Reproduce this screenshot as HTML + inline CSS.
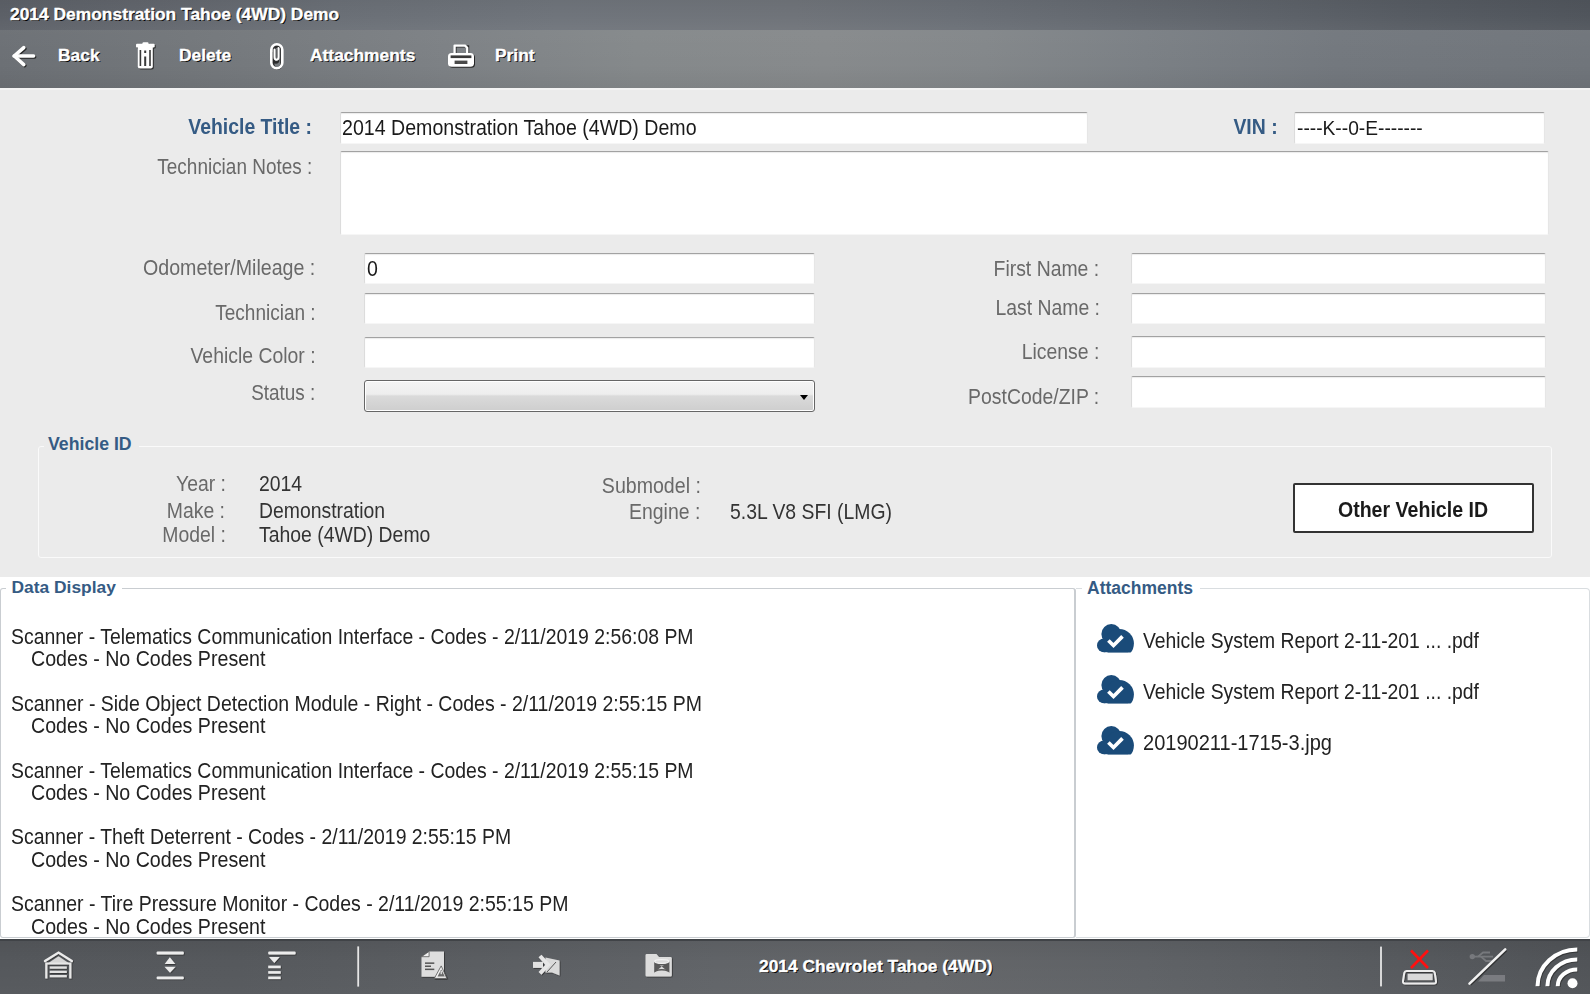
<!DOCTYPE html>
<html><head><meta charset="utf-8">
<style>
*{box-sizing:border-box;margin:0;padding:0}
html,body{width:1590px;height:994px;overflow:hidden;background:#ebebeb;font-family:"Liberation Sans",sans-serif;position:relative}
.a{position:absolute;white-space:nowrap;line-height:1}
#titlebar{position:absolute;left:0;top:0;width:1590px;height:30px;background:linear-gradient(180deg,rgba(0,0,0,0.04) 0%,rgba(0,0,0,0) 50%,rgba(255,255,255,0.04) 100%),linear-gradient(90deg,#5c6067 0%,#62666d 10%,#6a6f76 21%,#6f747b 35%,#6f7379 50%,#6a6f76 60%,#61666d 75%,#575c63 88%,#50555c 100%)}
#toolbar{position:absolute;left:0;top:30px;width:1590px;height:58px;background:linear-gradient(180deg,rgba(255,255,255,0.02) 0%,rgba(0,0,0,0) 60%,rgba(0,0,0,0.05) 100%),linear-gradient(90deg,#6c7075 0%,#73777b 12%,#7d8185 28%,#85898b 40%,#878a8c 52%,#83878a 62%,#7b8085 72%,#73787e 84%,#70757b 100%)}
#tbline{position:absolute;left:0;top:88px;width:1590px;height:2px;background:#f3f3f3}
.wt{color:#fff;font-weight:bold;text-shadow:1px 1px 0 #000;-webkit-text-stroke:0.35px #fff}
.lbl{color:#696969}
.blue{color:#355b84;font-weight:bold}
.val{color:#1a1a1a}
.vid{color:#333}
.dd{color:#222}
.inp{position:absolute;background:#fff;border-top:1.6px solid #a2a2a2;border-left:1px solid #dcdcdc;border-right:1px solid #e6e6e6;border-bottom:1px solid #f6f6f6;border-radius:2px;box-shadow:inset 0 1px 1px rgba(0,0,0,0.08)}
#lower{position:absolute;left:0;top:577px;width:1590px;height:362px;background:#fff}
#bottombar{position:absolute;left:0;top:939px;width:1590px;height:55px;border-top:2px solid #404347;background:linear-gradient(180deg,rgba(0,0,0,0.06) 0%,rgba(0,0,0,0) 40%,rgba(255,255,255,0.02) 100%),linear-gradient(90deg,#55585c 0%,#56595d 15%,#5b5e62 30%,#616468 45%,#646669 58%,#5f6266 72%,#585b5f 86%,#515458 100%)}
.cloud{position:absolute}
</style></head><body>
<svg width="0" height="0" style="position:absolute"><defs>
<clipPath id="cclip"><rect x="0" y="0" width="37" height="28.4"/></clipPath>
<symbol id="cloudsym" viewBox="0 0 37 29">
<g fill="#1a4b79" clip-path="url(#cclip)">
<circle cx="14.3" cy="9.9" r="9.9"/>
<circle cx="22.2" cy="19.6" r="14.7"/>
<circle cx="7" cy="21.4" r="7"/><rect x="7" y="18" width="24" height="10.4"/>
</g>
<polyline points="11.4,16.5 16.5,21.5 25.5,12.4" fill="none" stroke="#fff" stroke-width="3.7"/>
</symbol></defs></svg>

<div id="titlebar"></div>
<div class="a wt" style="left:10.00px;top:6.37px;font-size:17.40px">2014 Demonstration Tahoe (4WD) Demo</div>
<div id="toolbar"></div><div id="tbline"></div>
<!-- toolbar icons -->
<svg style="position:absolute;left:0;top:29px" width="600" height="58" viewBox="0 29 600 58">
<g fill="none" stroke="#1e1e1e" stroke-width="3.6" stroke-linecap="round" stroke-linejoin="round" transform="translate(1,1)" opacity="0.9">
<polyline points="23.8,47.6 14.2,56 23.8,64.6"/><line x1="14.2" y1="56" x2="33.6" y2="56"/>
</g>
<g fill="none" stroke="#fff" stroke-width="3.6" stroke-linecap="round" stroke-linejoin="round">
<polyline points="23.8,47.6 14.2,56 23.8,64.6"/><line x1="14.2" y1="56" x2="33.6" y2="56"/>
</g>
<!-- trash -->
<g transform="translate(1,1)" fill="#1e1e1e" opacity="0.85">
<rect x="136" y="43.8" width="18.7" height="3.6" rx="1"/><rect x="142.5" y="42.3" width="6" height="3" rx="1"/>
<path d="M137.8,47 H152.8 V66.5 Q152.8,68.5 150.8,68.5 H139.8 Q137.8,68.5 137.8,66.5 Z"/>
</g>
<g fill="#fff">
<rect x="136" y="43.8" width="18.7" height="3.6" rx="1"/><rect x="142.5" y="42.3" width="6" height="3" rx="1"/>
<path d="M137.8,47 H152.8 V66.5 Q152.8,68.5 150.8,68.5 H139.8 Q137.8,68.5 137.8,66.5 Z"/>
</g>
<g fill="#3a3a3a">
<rect x="139.6" y="50" width="1.6" height="16"/>
<rect x="149.2" y="50" width="1.6" height="16"/>
<rect x="144.2" y="50.5" width="2" height="2.5"/>
<rect x="144.2" y="56.5" width="2" height="9.5"/>
</g>
<!-- paperclip -->
<g fill="none" stroke-linecap="round">
<path d="M277,48.5 V59 Q277,61.5 275,61.5 Q273,61.5 273,59 V49 Q273,45.5 276.5,45.5 Q280.5,45.5 280.5,49 V62 Q280.5,67.5 276.5,67.5 Q272,67.5 272,62 V52" stroke="#1e1e1e" stroke-width="2.6" transform="translate(1,1)" opacity="0.85"/>
<rect x="271.3" y="44.2" width="11" height="24" rx="5.5" stroke="#fff" stroke-width="2.6"/>
<path d="M278.5,48 V57 Q278.5,59.8 276.5,59.8 Q274.5,59.8 274.5,57 V49.5" stroke="#fff" stroke-width="2"/>
</g>
<!-- printer -->
<g transform="translate(1,1)" opacity="0.9">
<rect x="454.5" y="45.4" width="12.6" height="8.5" fill="none" stroke="#1e1e1e" stroke-width="2.2"/>
<rect x="448" y="53" width="26" height="13.8" rx="3.6" fill="#1e1e1e"/>
</g>
<path d="M454.6,53.2 V45.6 H465 L467.2,47.8 V53.2" fill="none" stroke="#fff" stroke-width="2.3" stroke-linejoin="round"/>
<rect x="448" y="53" width="26" height="13.8" rx="3.6" fill="#fff"/>
<rect x="450.6" y="55.4" width="20.8" height="2.7" fill="#3a3a3a"/>
<rect x="454.6" y="60.6" width="12.8" height="3.4" fill="#4a4a4a"/>
</svg>
<div class="a wt" style="left:58.00px;top:47.47px;font-size:17.40px">Back</div>
<div class="a wt" style="left:179.00px;top:47.47px;font-size:17.40px">Delete</div>
<div class="a wt" style="left:310.00px;top:47.47px;font-size:17.40px">Attachments</div>
<div class="a wt" style="left:495.00px;top:47.47px;font-size:17.40px">Print</div>
<div class="inp" style="left:339.5px;top:111.5px;width:748.5px;height:32px"></div>
<div class="inp" style="left:1293.5px;top:111.5px;width:251.5px;height:32px"></div>
<div class="inp" style="left:339.5px;top:151px;width:1209.5px;height:83.5px"></div>
<div class="inp" style="left:364px;top:253px;width:451px;height:31px"></div>
<div class="inp" style="left:364px;top:293px;width:451px;height:31px"></div>
<div class="inp" style="left:364px;top:337px;width:451px;height:31px"></div>
<div style="position:absolute;left:364px;top:380px;width:451px;height:32px;border:1px solid #666;border-radius:3px;box-shadow:inset 0 0 0 1px #fff;background:linear-gradient(#f4f4f4 0%,#eeeeee 44%,#dadada 50%,#cecece 100%)"></div>
<div style="position:absolute;left:800px;top:395px;width:0;height:0;border-left:4.5px solid transparent;border-right:4.5px solid transparent;border-top:5px solid #000"></div>
<div class="inp" style="left:1131px;top:253px;width:415px;height:31px"></div>
<div class="inp" style="left:1131px;top:293px;width:415px;height:31px"></div>
<div class="inp" style="left:1131px;top:336px;width:415px;height:32px"></div>
<div class="inp" style="left:1131px;top:376px;width:415px;height:32px"></div>
<div class="a blue" style="right:1278.50px;top:116.84px;font-size:21.34px;transform:scaleX(0.9091);transform-origin:right top">Vehicle Title :</div>
<div class="a val" style="left:342.00px;top:116.75px;font-size:21.56px;transform:scaleX(0.9091);transform-origin:left top">2014 Demonstration Tahoe (4WD) Demo</div>
<div class="a blue" style="right:312.00px;top:116.84px;font-size:21.34px;transform:scaleX(0.9091);transform-origin:right top">VIN :</div>
<div class="a val" style="left:1296.50px;top:117.32px;font-size:21.12px;transform:scaleX(0.9091);transform-origin:left top">----K--0-E-------</div>
<div class="a lbl" style="right:1277.50px;top:156.74px;font-size:21.34px;transform:scaleX(0.8891);transform-origin:right top">Technician Notes :</div>
<div class="a lbl" style="right:1274.50px;top:258.34px;font-size:21.34px;transform:scaleX(0.9200);transform-origin:right top">Odometer/Mileage :</div>
<div class="a lbl" style="right:1274.50px;top:303.34px;font-size:21.34px;transform:scaleX(0.8909);transform-origin:right top">Technician :</div>
<div class="a lbl" style="right:1274.50px;top:345.74px;font-size:21.34px;transform:scaleX(0.9091);transform-origin:right top">Vehicle Color :</div>
<div class="a lbl" style="right:1274.50px;top:382.54px;font-size:21.34px;transform:scaleX(0.8864);transform-origin:right top">Status :</div>
<div class="a val" style="left:367.00px;top:258.45px;font-size:21.56px;transform:scaleX(0.9091);transform-origin:left top">0</div>
<div class="a lbl" style="right:490.50px;top:258.74px;font-size:21.34px;transform:scaleX(0.9091);transform-origin:right top">First Name :</div>
<div class="a lbl" style="right:490.50px;top:298.34px;font-size:21.34px;transform:scaleX(0.9091);transform-origin:right top">Last Name :</div>
<div class="a lbl" style="right:490.50px;top:341.54px;font-size:21.34px;transform:scaleX(0.9091);transform-origin:right top">License :</div>
<div class="a lbl" style="right:490.50px;top:386.54px;font-size:21.34px;transform:scaleX(0.9091);transform-origin:right top">PostCode/ZIP :</div>
<div style="position:absolute;left:38px;top:446px;width:1514px;height:112px;border:1.5px solid #fafafa;border-radius:3px"></div>
<div style="position:absolute;left:44px;top:440px;width:95px;height:10px;background:#ebebeb"></div>
<div class="a blue" style="left:48.00px;top:435.82px;font-size:17.70px">Vehicle ID</div>
<div class="a lbl" style="right:1364.50px;top:474.14px;font-size:21.34px;transform:scaleX(0.9091);transform-origin:right top">Year :</div>
<div class="a lbl" style="right:1364.50px;top:501.14px;font-size:21.34px;transform:scaleX(0.9091);transform-origin:right top">Make :</div>
<div class="a lbl" style="right:1364.50px;top:525.34px;font-size:21.34px;transform:scaleX(0.9091);transform-origin:right top">Model :</div>
<div class="a vid" style="left:259.00px;top:474.14px;font-size:21.34px;transform:scaleX(0.9091);transform-origin:left top">2014</div>
<div class="a vid" style="left:259.00px;top:501.14px;font-size:21.34px;transform:scaleX(0.9091);transform-origin:left top">Demonstration</div>
<div class="a vid" style="left:259.00px;top:525.34px;font-size:21.34px;transform:scaleX(0.9091);transform-origin:left top">Tahoe (4WD) Demo</div>
<div class="a lbl" style="right:889.00px;top:476.14px;font-size:21.34px;transform:scaleX(0.9182);transform-origin:right top">Submodel :</div>
<div class="a lbl" style="right:890.00px;top:501.74px;font-size:21.34px;transform:scaleX(0.9091);transform-origin:right top">Engine :</div>
<div class="a vid" style="left:730.00px;top:501.74px;font-size:21.34px;transform:scaleX(0.9091);transform-origin:left top">5.3L V8 SFI (LMG)</div>
<div style="position:absolute;left:1293px;top:483px;width:241px;height:50px;border:2px solid #333;background:#fff;border-radius:2px"></div>
<div class="a a" style="left:1013.00px;width:800px;text-align:center;top:499.54px;font-size:21.34px;transform:scaleX(0.9182);transform-origin:center top;font-weight:bold;color:#1a1a1a">Other Vehicle ID</div>
<div id="lower"></div>
<div style="position:absolute;left:0;top:588px;width:1076px;height:350px;border:1px solid #c9cdd1;border-right:2px solid #c9cdd1;border-radius:3px"></div>
<div style="position:absolute;left:1076px;top:588px;width:514px;height:350px;border:1px solid #d9dde0;border-left:none;border-radius:0 4px 4px 0"></div>
<div style="position:absolute;left:6px;top:580px;width:116px;height:14px;background:#fff"></div>
<div class="a blue" style="left:11.50px;top:579.27px;font-size:17.40px">Data Display</div>
<div style="position:absolute;left:1082px;top:580px;width:118px;height:14px;background:#fff"></div>
<div class="a blue" style="left:1087.00px;top:579.79px;font-size:17.50px">Attachments</div>
<div class="a dd" style="left:11.00px;top:626.74px;font-size:21.34px;transform:scaleX(0.9105);transform-origin:left top">Scanner - Telematics Communication Interface - Codes - 2/11/2019 2:56:08 PM</div>
<div class="a dd" style="left:31.00px;top:649.04px;font-size:21.34px;transform:scaleX(0.9200);transform-origin:left top">Codes - No Codes Present</div>
<div class="a dd" style="left:11.00px;top:693.64px;font-size:21.34px;transform:scaleX(0.9127);transform-origin:left top">Scanner - Side Object Detection Module - Right - Codes - 2/11/2019 2:55:15 PM</div>
<div class="a dd" style="left:31.00px;top:715.94px;font-size:21.34px;transform:scaleX(0.9200);transform-origin:left top">Codes - No Codes Present</div>
<div class="a dd" style="left:11.00px;top:760.54px;font-size:21.34px;transform:scaleX(0.9105);transform-origin:left top">Scanner - Telematics Communication Interface - Codes - 2/11/2019 2:55:15 PM</div>
<div class="a dd" style="left:31.00px;top:782.84px;font-size:21.34px;transform:scaleX(0.9200);transform-origin:left top">Codes - No Codes Present</div>
<div class="a dd" style="left:11.00px;top:827.44px;font-size:21.34px;transform:scaleX(0.9105);transform-origin:left top">Scanner - Theft Deterrent - Codes - 2/11/2019 2:55:15 PM</div>
<div class="a dd" style="left:31.00px;top:849.74px;font-size:21.34px;transform:scaleX(0.9200);transform-origin:left top">Codes - No Codes Present</div>
<div class="a dd" style="left:11.00px;top:894.34px;font-size:21.34px;transform:scaleX(0.9136);transform-origin:left top">Scanner - Tire Pressure Monitor - Codes - 2/11/2019 2:55:15 PM</div>
<div class="a dd" style="left:31.00px;top:916.64px;font-size:21.34px;transform:scaleX(0.9200);transform-origin:left top">Codes - No Codes Present</div>
<svg class="cloud" style="left:1097px;top:623.8px" width="37" height="29" viewBox="0 0 37 29"><use href="#cloudsym"/></svg>
<div class="a dd" style="left:1143.00px;top:631.14px;font-size:21.34px;transform:scaleX(0.9064);transform-origin:left top">Vehicle System Report 2-11-201 ... .pdf</div>
<svg class="cloud" style="left:1097px;top:674.8px" width="37" height="29" viewBox="0 0 37 29"><use href="#cloudsym"/></svg>
<div class="a dd" style="left:1143.00px;top:682.14px;font-size:21.34px;transform:scaleX(0.9064);transform-origin:left top">Vehicle System Report 2-11-201 ... .pdf</div>
<svg class="cloud" style="left:1097px;top:725.8px" width="37" height="29" viewBox="0 0 37 29"><use href="#cloudsym"/></svg>
<div class="a dd" style="left:1143.00px;top:733.14px;font-size:21.34px;transform:scaleX(0.9391);transform-origin:left top">20190211-1715-3.jpg</div>
<div id="bottombar"></div>
<!-- bottom icons -->
<svg style="position:absolute;left:0;top:939px" width="1590" height="55" viewBox="0 939 1590 55">
<defs><filter id="ds" x="-20%" y="-20%" width="140%" height="140%"><feDropShadow dx="0.7" dy="0.7" stdDeviation="0.5" flood-color="#222" flood-opacity="0.9"/></filter></defs>
<g filter="url(#ds)">
<!-- garage -->
<polygon points="47.3,963.8 58.5,956.2 69.8,963.8" fill="#d6d6d6"/>
<polyline points="45,961.1 58.5,952.6 71.8,961.1" fill="none" stroke="#ececec" stroke-width="2.4" stroke-linecap="round"/>
<path d="M46.3,978.6 V963.5 H70.3 V978.6" fill="none" stroke="#e8e8e8" stroke-width="2.2"/>
<g fill="#e2e2e2"><rect x="49.7" y="966.4" width="17.1" height="2.3"/><rect x="49.7" y="970.7" width="17.1" height="2.3"/><rect x="49.7" y="975" width="17.1" height="2.3"/></g>
<!-- collapse -->
<g fill="#ececec">
<rect x="156.6" y="951.6" width="27.2" height="2.8" rx="1"/>
<rect x="156.6" y="976.4" width="27.2" height="2.8" rx="1"/>
<polygon points="169.8,957.3 164.7,963.9 175.3,963.9"/>
<polygon points="164.5,966.7 175.6,966.7 170,972.8"/>
</g>
<!-- expand -->
<g fill="#ececec">
<rect x="268.2" y="951.6" width="27.4" height="2.8" rx="1"/>
<polygon points="269,957.1 279.7,957.1 274.3,963.1"/>
<rect x="268.2" y="965.6" width="12.5" height="2.6"/>
<rect x="268.2" y="971.1" width="12.5" height="2.6"/>
<rect x="268.2" y="976.5" width="12.5" height="2.6"/>
</g>
</g>
<rect x="357.3" y="946.4" width="1.8" height="40.2" fill="#e6e6e6"/>
<g filter="url(#ds)">
<!-- doc warning -->
<path d="M429.1,951.4 H444 V976.8 H421.5 V956.7 Z" fill="#dedede"/>
<path d="M421.5,956.7 L429.1,951.4 V956.7 Z" fill="#f0f0f0" stroke="#555" stroke-width="0.8"/>
<g fill="#555"><rect x="425" y="962.4" width="9.3" height="1.5"/><rect x="425" y="965.5" width="6" height="1.5"/><rect x="425" y="968.6" width="9.3" height="1.5"/></g>
<polygon points="441.2,965.9 434.3,978.4 446.8,978.4" fill="#f2f2f2" stroke="#555" stroke-width="0.8"/>
<polygon points="441.2,969.5 437.5,976.5 444.9,976.5" fill="#6a6a6a"/>
<rect x="440.6" y="971" width="1.2" height="3.2" fill="#eee"/>
<!-- arrow flag -->
<polygon points="545.5,957.5 559.5,960.5 559.5,975.6 552,972.5 545.5,972.5" fill="#dadada"/>
<line x1="547" y1="972" x2="556" y2="962" stroke="#555" stroke-width="1"/>
<rect x="533" y="961.9" width="10" height="6" fill="#e2e2e2"/>
<polyline points="540,956 548,964.8 540,973.3" fill="none" stroke="#e6e6e6" stroke-width="4"/>
<!-- folder -->
<path d="M645.5,955.2 Q645.5,954 646.7,954 H656.5 L659,957.1 H670.6 Q671.8,957.1 671.8,958.3 V975.2 Q671.8,976.4 670.6,976.4 H646.7 Q645.5,976.4 645.5,975.2 Z" fill="#dcdcdc"/>
<path d="M654.2,961.5 L661.7,966.5 L654.2,972.8 Z M669.4,961.5 L661.7,966.5 L669.4,972.8 Z" fill="#5a5a5a"/>
<path d="M655,963.5 Q661.7,966 668.6,963.5 M655,971 Q661.7,968.5 668.6,971" fill="none" stroke="#5a5a5a" stroke-width="1.6"/>
<ellipse cx="661.7" cy="961.5" rx="7" ry="1.8" fill="none" stroke="#f2f2f2" stroke-width="1.2"/>
</g>
<rect x="1380.1" y="946.6" width="1.8" height="39.8" fill="#e6e6e6"/>
<!-- red x -->
<g stroke="#ff1010" stroke-width="2.6"><line x1="1411" y1="950.5" x2="1428" y2="968"/><line x1="1428" y1="950.5" x2="1411" y2="968"/></g>
<g filter="url(#ds)">
<path d="M1406.5,971 H1432.5 Q1434.2,971 1434.7,972.8 L1436,981 Q1436.3,983.5 1434,983.5 H1405 Q1402.7,983.5 1403,981 L1404.3,972.8 Q1404.8,971 1406.5,971 Z" fill="none" stroke="#ececec" stroke-width="2"/>
<rect x="1407.6" y="973.7" width="25" height="6.5" fill="#d9d9d9"/>
</g>
<!-- usb -->
<g fill="none" stroke="#7b7d81" stroke-width="1.8" opacity="0.9">
<line x1="1471" y1="956.6" x2="1493" y2="956.6"/><circle cx="1472.3" cy="956.6" r="1.8" fill="#7b7d81"/>
<path d="M1478,956.6 L1483,952.5 H1490"/><path d="M1481,956.6 L1486,961 H1492"/>
</g>
<polygon points="1484,975 1505,975 1505,981.5 1478,981.5" fill="#7e8084" opacity="0.9"/>
<line x1="1469.5" y1="983.6" x2="1505.2" y2="949.4" stroke="#222" stroke-width="3" transform="translate(0.8,0.8)" opacity="0.7"/>
<line x1="1469.5" y1="983.6" x2="1505.2" y2="949.4" stroke="#f2f2f2" stroke-width="2.6" stroke-linecap="round"/>
<!-- wifi -->
<g fill="none" stroke="#222" stroke-width="4.2" opacity="0.6" transform="translate(0.8,0.8)">
<path d="M1557.7,986.3 A19.6,16.9 0 0 1 1577.3,969.4"/>
<path d="M1547.4,986.3 A29.9,26.9 0 0 1 1577.3,959.4"/>
<path d="M1537.5,986.3 A39.8,36.8 0 0 1 1577.3,949.5"/>
</g>
<g fill="none" stroke="#fff" stroke-width="4">
<path d="M1557.7,986.3 A19.6,16.9 0 0 1 1577.3,969.4"/>
<path d="M1547.4,986.3 A29.9,26.9 0 0 1 1577.3,959.4"/>
<path d="M1537.5,986.3 A39.8,36.8 0 0 1 1577.3,949.5"/>
</g>
<circle cx="1572.5" cy="983.2" r="5" fill="#fff"/>
</svg>
<div class="a wt" style="left:759.00px;top:958.27px;font-size:17.40px">2014 Chevrolet Tahoe (4WD)</div>
</body></html>
